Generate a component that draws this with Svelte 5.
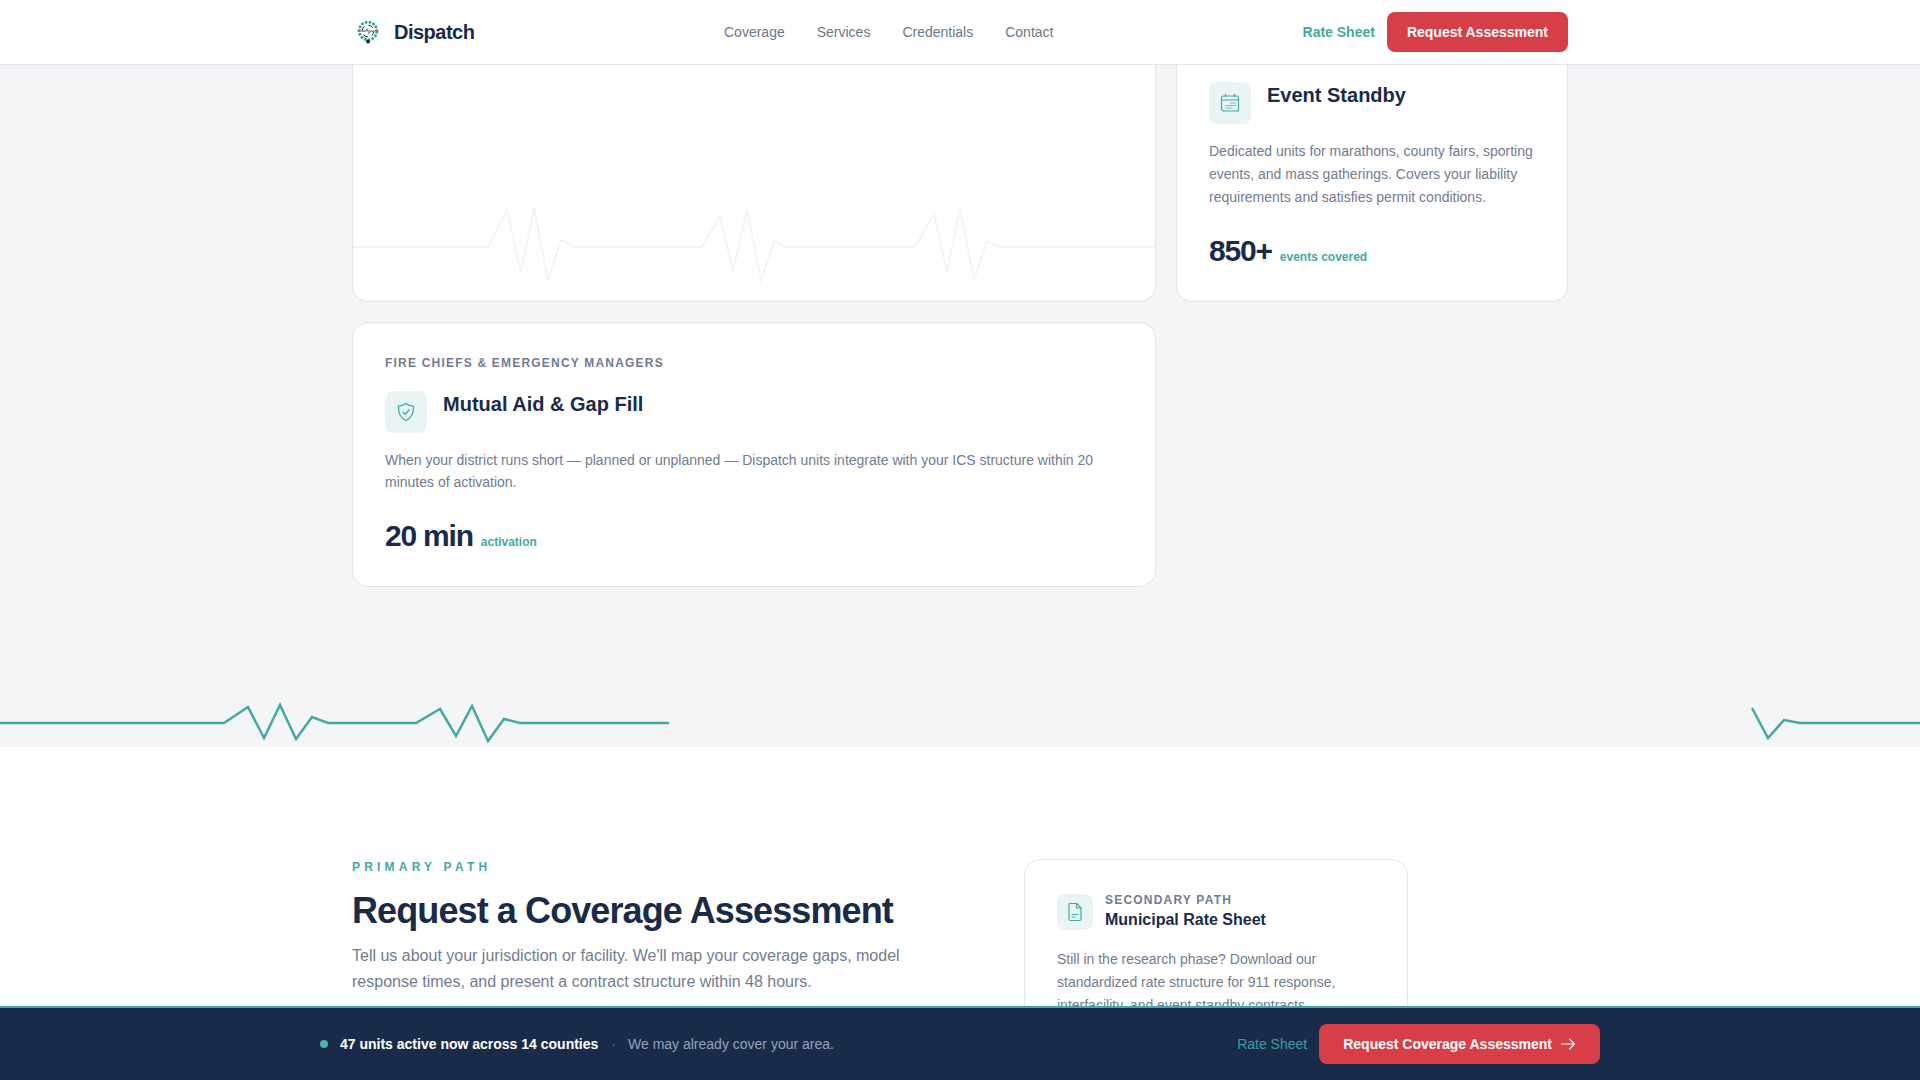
<script lang="ts">
  const navLinks = ["Coverage", "Services", "Credentials", "Contact"];

  // heartbeat traces, points read off the page
  const cardBeat =
    "0,247 135,247 154,210 168,273 181,207 195,280 208,240 221,247 349,247 367,216 380,271 394,210 408,280 421,241 432,247 562,247 581,214 594,272 607,209 621,280 634,241 646,247 804,247";
  const dividerLeft =
    "0,24 224,24 248,8 264,39 280,6 296,40 312,18 328,24 416,24 440,10 456,37 472,7 488,42 504,20 520,24 669,24";
  const dividerRight = "1752,9 1768,39 1784,21 1800,24 1920,24";
</script>

<div class="page">
  <header class="nav">
    <div class="nav-inner">
      <a class="brand" href="#top">
        <svg class="logo" width="24" height="24" viewBox="0 0 24 24" fill="none">
          <circle cx="12" cy="11" r="8.8" stroke="#3aa89f" stroke-width="2.8" stroke-dasharray="2.6 1.2" />
          <circle cx="12" cy="11" r="5.8" stroke="#1a2b4a" stroke-width="1" stroke-dasharray="5 4" />
          <path d="M1.5 11H22.5" stroke="#d63f47" stroke-width="0.8" />
          <path d="M6 11.2H9.5L11 8.5L12.8 13.5L14.2 11.2H18" stroke="#3aa89f" stroke-width="1" />
          <circle cx="12" cy="21.5" r="2" fill="#1a2b4a" />
        </svg>
        <span>Dispatch</span>
      </a>
      <nav class="links">
        {#each navLinks as link}
          <a href="#top">{link}</a>
        {/each}
      </nav>
      <div class="nav-actions">
        <a class="rate" href="#top">Rate Sheet</a>
        <button class="btn">Request Assessment</button>
      </div>
    </div>
  </header>

  <section class="coverage">
    <div class="grid">
      <article class="card wide">
        <svg class="card-beat" width="804" height="302" viewBox="0 0 804 302" fill="none">
          <polyline points={cardBeat} stroke="#eff7f6" stroke-width="2" />
        </svg>
      </article>

      <article class="card event">
        <div class="card-head">
          <span class="icon">
            <svg width="20" height="20" viewBox="0 0 20 20" fill="none" stroke="currentColor" stroke-width="1.2" stroke-linecap="round">
              <rect x="1.5" y="3" width="17" height="15" rx="2" />
              <path d="M5.5 1.2V3.6M14.5 1.2V3.6M1.5 7H18.5" />
              <path d="M10.5 10H15.5M6 12.5H15.5M6 15H12" stroke-width="0.7" />
            </svg>
          </span>
          <h3>Event Standby</h3>
        </div>
        <p class="desc tall">
          Dedicated units for marathons, county fairs, sporting events, and mass gatherings. Covers your liability requirements and satisfies permit conditions.
        </p>
        <div class="metric"><strong>850+</strong><span>events covered</span></div>
      </article>

      <article class="card mutual">
        <div class="eyebrow">Fire Chiefs &amp; Emergency Managers</div>
        <div class="card-head">
          <span class="icon">
            <svg width="20" height="20" viewBox="0 0 20 20" fill="none" stroke="currentColor" stroke-width="1.3" stroke-linecap="round" stroke-linejoin="round">
              <path d="M10 1.5C12 3.2 14.6 4.1 17.5 4.1C17.8 10.5 15.5 16 10 18.5C4.5 16 2.2 10.5 2.5 4.1C5.4 4.1 8 3.2 10 1.5Z" />
              <path d="M7 10.2L9.2 12.2L13 8" />
            </svg>
          </span>
          <h3>Mutual Aid &amp; Gap Fill</h3>
        </div>
        <p class="desc">
          When your district runs short — planned or unplanned — Dispatch units integrate with your ICS structure within 20 minutes of activation.
        </p>
        <div class="metric"><strong>20 min</strong><span>activation</span></div>
      </article>
    </div>

    <svg class="divider" width="1920" height="48" viewBox="0 0 1920 48" fill="none">
      <polyline points={dividerLeft} stroke="#45a9a2" stroke-width="2.5" />
      <polyline points={dividerRight} stroke="#45a9a2" stroke-width="2.5" />
    </svg>
  </section>

  <section class="assess">
    <div class="assess-inner">
      <div class="primary">
        <div class="kicker">Primary Path</div>
        <h2>Request a Coverage Assessment</h2>
        <p class="lead">
          Tell us about your jurisdiction or facility. We'll map your coverage gaps, model response times, and present a contract structure within 48 hours.
        </p>
      </div>
      <aside class="secondary">
        <div class="secondary-head">
          <span class="icon small">
            <svg width="20" height="20" viewBox="0 0 20 20" fill="none" stroke="currentColor" stroke-width="1.2" stroke-linecap="round" stroke-linejoin="round">
              <path d="M4.5 1.5H11.5L16 6V17A1.5 1.5 0 0 1 14.5 18.5H5.5A1.5 1.5 0 0 1 4 17V2A.5 .5 0 0 1 4.5 1.5Z" />
              <path d="M11.5 1.5V6H16M7 12.5H13M7 15H10" />
            </svg>
          </span>
          <div>
            <div class="secondary-label">Secondary Path</div>
            <div class="secondary-title">Municipal Rate Sheet</div>
          </div>
        </div>
        <p class="desc tall">
          Still in the research phase? Download our standardized rate structure for 911 response, interfacility, and event standby contracts.
        </p>
      </aside>
    </div>
  </section>

  <div class="sticky">
    <div class="sticky-inner">
      <div class="status">
        <span class="dot"></span>
        <strong>47 units active now across 14 counties</strong>
        <span class="sep">·</span>
        <span class="note">We may already cover your area.</span>
      </div>
      <div class="sticky-actions">
        <a class="sticky-rate" href="#top">Rate Sheet</a>
        <button class="btn arrow-btn">
          Request Coverage Assessment
          <svg width="16" height="16" viewBox="0 0 16 16" fill="none" stroke="currentColor" stroke-width="1.1" stroke-linecap="round" stroke-linejoin="round">
            <path d="M1.5 8H14M9.5 3L14.5 8L9.5 13" />
          </svg>
        </button>
      </div>
    </div>
  </div>
</div>

<style>
  :global(body) {
    font-family: "Liberation Sans", Arial, sans-serif;
    background: #fff;
  }

  .page {
    height: 100vh;
    overflow: hidden;
  }

  a {
    text-decoration: none;
  }

  h2,
  h3,
  p {
    margin: 0;
  }

  .nav {
    position: fixed;
    top: 0;
    left: 0;
    right: 0;
    z-index: 10;
    height: 64px;
    background: #fff;
    border-bottom: 1px solid #e2e5e9;
  }

  .nav-inner {
    display: grid;
    grid-template-columns: 372px 1fr auto;
    align-items: center;
    width: 1216px;
    height: 100%;
    margin: 0 auto;
  }

  .brand {
    display: flex;
    align-items: center;
    gap: 14px;
    padding-left: 4px;
    color: #1a2b4a;
    font-size: 20px;
    font-weight: 700;
    letter-spacing: -0.025em;
  }

  .links {
    display: flex;
    gap: 32px;
  }

  .links a {
    color: #6e7685;
    font-size: 14px;
  }

  .nav-actions {
    display: flex;
    align-items: center;
    gap: 12px;
  }

  .rate {
    color: #45a9a2;
    font-size: 14px;
    font-weight: 700;
  }

  .btn {
    height: 40px;
    padding: 0 20px;
    border: 0;
    border-radius: 8px;
    background: #d63f47;
    color: #fff;
    font-family: inherit;
    font-size: 14px;
    font-weight: 700;
  }

  .coverage {
    background: #f3f5f7;
  }

  .grid {
    display: grid;
    grid-template-columns: repeat(3, 1fr);
    gap: 20px;
    width: 1216px;
    margin: 0 auto;
  }

  .card {
    box-sizing: border-box;
    padding: 32px;
    background: #fff;
    border: 1px solid #e2e5e9;
    border-radius: 16px;
  }

  .wide {
    position: relative;
    grid-column: span 2;
    overflow: hidden;
    padding: 0;
    border-top: 0;
    border-radius: 0 0 16px 16px;
  }

  .card-beat {
    position: absolute;
    top: 0;
    left: 0;
  }

  .event {
    height: 302px;
    padding-top: 82px;
    border-top: 0;
    border-radius: 0 0 16px 16px;
  }

  .mutual {
    grid-column: span 2;
  }

  .eyebrow {
    margin-bottom: 20px;
    color: #717c90;
    font-size: 12px;
    font-weight: 700;
    line-height: 16px;
    letter-spacing: 0.1em;
    text-transform: uppercase;
  }

  .card-head {
    display: flex;
    align-items: flex-start;
    gap: 16px;
    margin-bottom: 16px;
  }

  .card-head h3 {
    color: #1a2b4a;
    font-size: 20px;
    font-weight: 700;
    line-height: 26px;
  }

  .icon {
    display: flex;
    flex: none;
    align-items: center;
    justify-content: center;
    width: 42px;
    height: 42px;
    border-radius: 8px;
    background: #e9f5f4;
    color: #45a9a2;
  }

  .icon.small {
    width: 36px;
    height: 36px;
  }

  .desc {
    color: #717c90;
    font-size: 14px;
    line-height: 22.4px;
  }

  .desc.tall {
    line-height: 23px;
  }

  .metric {
    display: flex;
    align-items: baseline;
    gap: 8px;
    margin-top: 24px;
  }

  .metric strong {
    color: #1a2b4a;
    font-size: 30px;
    font-weight: 700;
    line-height: 36px;
    letter-spacing: -0.04em;
  }

  .metric span {
    color: #45a9a2;
    font-size: 12px;
    font-weight: 700;
  }

  .divider {
    display: block;
    margin-top: 112px;
  }

  .assess {
    height: 400px;
    background: #fff;
  }

  .assess-inner {
    display: grid;
    grid-template-columns: 608px 384px;
    gap: 64px;
    width: 1216px;
    margin: 0 auto;
    padding-top: 112px;
  }

  .kicker {
    margin: 1px 0 14px;
    color: #45a9a2;
    font-size: 12px;
    font-weight: 700;
    line-height: 15px;
    letter-spacing: 0.35em;
    text-transform: uppercase;
  }

  .assess h2 {
    margin-bottom: 11px;
    color: #1a2b4a;
    font-size: 36px;
    font-weight: 700;
    line-height: 43px;
    letter-spacing: -0.025em;
  }

  .lead {
    color: #717c90;
    font-size: 16px;
    line-height: 26px;
  }

  .secondary {
    box-sizing: border-box;
    height: 300px;
    padding: 32px;
    border: 1px solid #e2e5e9;
    border-radius: 16px;
  }

  .secondary-head {
    display: flex;
    align-items: center;
    gap: 12px;
    margin-bottom: 16px;
  }

  .secondary-label {
    color: #717c90;
    font-size: 12px;
    font-weight: 700;
    line-height: 16px;
    letter-spacing: 0.1em;
    text-transform: uppercase;
  }

  .secondary-title {
    color: #1a2b4a;
    font-size: 16px;
    font-weight: 700;
    line-height: 24px;
  }

  .sticky {
    position: fixed;
    left: 0;
    right: 0;
    bottom: 0;
    z-index: 10;
    height: 72px;
    background: #1a2b4a;
    border-top: 2px solid #45a9a2;
  }

  .sticky-inner {
    display: flex;
    align-items: center;
    justify-content: space-between;
    width: 1280px;
    height: 100%;
    margin: 0 auto;
  }

  .status {
    display: flex;
    align-items: center;
    font-size: 14px;
  }

  .dot {
    width: 8px;
    height: 8px;
    margin-right: 12px;
    border-radius: 50%;
    background: #45b5ad;
  }

  .status strong {
    color: #fff;
    font-weight: 700;
  }

  .sep {
    margin: 0 12px 0 13px;
    color: #5d6b84;
  }

  .note {
    color: #94a3b8;
  }

  .sticky-actions {
    display: flex;
    align-items: center;
    gap: 12px;
  }

  .sticky-rate {
    color: #3f9aa0;
    font-size: 14px;
  }

  .arrow-btn {
    display: flex;
    align-items: center;
    gap: 8px;
    padding: 0 24px;
  }
</style>
